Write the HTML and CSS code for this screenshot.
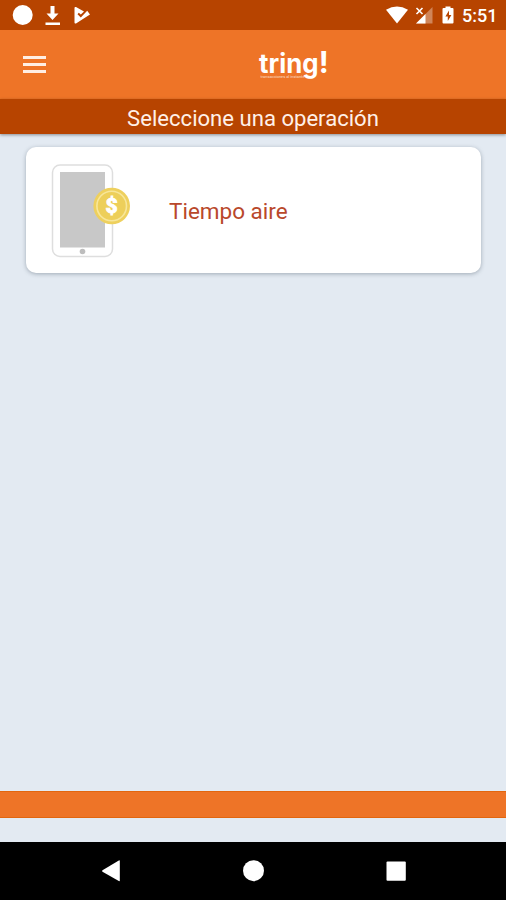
FILE: index.html
```html
<!DOCTYPE html>
<html lang="es">
<head>
  <meta charset="UTF-8">
  <title>tring!</title>
  <link rel="stylesheet" href="styles.css">
</head>
<body>
  <div class="status-bar">
    <svg class="status-left" width="100" height="30" viewBox="0 0 100 30" fill="#fff">
      <circle cx="22.7" cy="15" r="10"/>
      <path d="M50.500 6h4v7.500h4l-6 6.500-6-6.500h4zM45.500 22.500h14.500v2.500h-14.500z"/>
      <path d="M74.500 8Q74.500 6.500 76 7L84 11.500 80.800 14.500 78.800 12.800 77.500 14.300 80.800 17.500 87.200 10.800 90 14.500 84.500 18 76 23.400Q74.500 24 74.500 22.500z"/>
    </svg>
    <div class="status-right">
      <svg width="76" height="30" viewBox="382 0 76 30" fill="#fff">
        <path d="M386 9.800Q397 3 408 9.800L397 23.500z"/>
        <path d="M432.500 7V23.500H416z" opacity=".35"/>
        <path d="M425.500 14V23.500H416z"/>
        <path d="M416.500 8l6 6M422.500 8l-6 6" stroke="#fff" stroke-width="1.600"/>
        <path d="M445.500 6.500h5v1.500h2q1 0 1 1V22.500q0 1-1 1h-9q-1 0-1-1V9q0-1 1-1h2z"/>
        <path d="M449 10.500l-3.600 6h2.400V21l3.600-6h-2.400z" fill="#b74400"/>
      </svg>
      <span class="clock">5:51</span>
    </div>
  </div>

  <header class="toolbar">
    <button class="menu" aria-label="Menú">
      <span></span>
      <span></span>
      <span></span>
    </button>
    <svg class="logo" width="90" height="50" viewBox="257 39 90 50" fill="#fff">
      <text class="logo-name" x="259" y="72" textLength="59.500" lengthAdjust="spacingAndGlyphs">tring</text>
      <text class="logo-mark" x="318.800" y="72" textLength="10" lengthAdjust="spacingAndGlyphs">!</text>
      <text class="logo-tag" x="260.500" y="77" textLength="44" lengthAdjust="spacingAndGlyphs">transacciones al instante</text>
    </svg>
  </header>

  <h1 class="title">Seleccione una operación</h1>

  <main class="content">
    <a class="card">
      <svg width="84" height="96" viewBox="48 162 84 96">
        <rect x="52.500" y="165" width="60" height="91.500" rx="7.500" fill="#fff" stroke="#dedede" stroke-width="1.500"/>
        <rect x="60" y="172" width="45" height="75.500" fill="#c8c8c8"/>
        <circle cx="82.500" cy="251.500" r="2.800" fill="#bdbdbd"/>
        <circle cx="111.700" cy="206" r="18.300" fill="#eed05d"/>
        <circle cx="111.700" cy="206" r="14.800" fill="#edcf5a" stroke="#f7e69a" stroke-width="1.600"/>
        <text class="coin-sign" x="111.700" y="213.300" text-anchor="middle">$</text>
      </svg>
      <span class="card-label">Tiempo aire</span>
    </a>
  </main>

  <footer class="footer"></footer>

  <nav class="nav-bar">
    <svg width="506" height="58" viewBox="0 842 506 58" fill="#fff">
      <path d="M119.800 861v19.500q0 1-1 .5L102.500 871.700q-1-.7 0-1.400L118.800 860.500q1-.5 1 .5z"/>
      <circle cx="253.500" cy="870.700" r="10.500"/>
      <rect x="386.500" y="861.500" width="19.300" height="19.300" rx="1"/>
    </svg>
  </nav>
</body>
</html>
```

FILE: styles.css
```css
* {
  box-sizing: border-box;
}
body {
  margin: 0;
  height: 100vh;
  display: flex;
  flex-direction: column;
  overflow: hidden;
  background: #e3eaf2;
  font-family: Roboto, "Liberation Sans", sans-serif;
}
svg {
  display: block;
}
.status-bar {
  display: flex;
  justify-content: space-between;
  height: 30px;
  background: #b74400;
  color: #fff;
}
.status-right {
  display: flex;
  align-items: center;
  gap: 4px;
  padding-right: 10px;
}
.clock {
  font-size: 18px;
  font-weight: 500;
  line-height: 30px;
  padding-top: 2px;
  width: 34px;
  white-space: nowrap;
}
.toolbar {
  display: flex;
  align-items: center;
  height: 69px;
  padding-left: 23px;
  background: #ee7427;
}
.menu {
  display: flex;
  flex-direction: column;
  gap: 4px;
  width: 23px;
  padding: 0;
  border: none;
  background: none;
}
.menu span {
  height: 3px;
  background: #ffeee3;
}
.logo {
  margin-left: 211px;
}
.logo-name {
  font-family: Inter, sans-serif;
  font-weight: 700;
  font-size: 26px;
}
.logo-mark {
  font-family: Inter, sans-serif;
  font-weight: 700;
  font-size: 30px;
}
.logo-tag {
  font-size: 4px;
  opacity: 0.7;
}
.title {
  height: 35px;
  margin: 0;
  padding-top: 1px;
  background: #b74400;
  box-shadow: 0 1px 3px rgba(0, 0, 0, 0.4);
  color: #fff0e8;
  font-size: 22.1px;
  font-weight: 400;
  line-height: 36px;
  text-align: center;
}
.content {
  flex: 1;
  padding: 13px 25px 0 26px;
}
.card {
  display: flex;
  align-items: center;
  height: 126px;
  padding-left: 22px;
  gap: 37px;
  background: #fff;
  border-radius: 10px;
  box-shadow: 0 1px 4px rgba(60, 75, 90, 0.4);
}
.coin-sign {
  font-family: Roboto, sans-serif;
  font-size: 21px;
  font-weight: 900;
  fill: #fff;
  stroke: #fff;
  stroke-width: 0.8px;
}
.card-label {
  color: #b9482b;
  font-size: 22.5px;
  padding-top: 1px;
}
.footer {
  height: 27px;
  margin-bottom: 24px;
  background: #ee7427;
  border-bottom: 1px solid #e2660f;
  border-top: 1px solid #e2660f;
}
.nav-bar {
  height: 58px;
  background: #000;
}
```
